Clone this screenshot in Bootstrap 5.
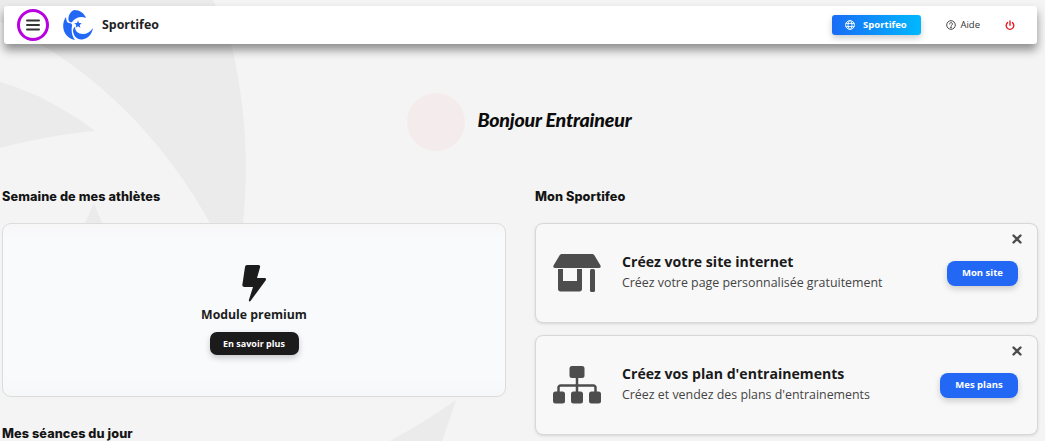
<!DOCTYPE html>
<html lang="fr">
<head>
<meta charset="utf-8">
<title>Sportifeo</title>
<link href="https://cdn.jsdelivr.net/npm/bootstrap@5.3.0/dist/css/bootstrap.min.css" rel="stylesheet">
<style>
html,body{height:441px;overflow:hidden}
body{background:#f4f4f4;font-family:"Open Sans","Liberation Sans",sans-serif;color:#111;position:relative}
.wm{position:absolute;left:0;top:0;width:1045px;height:441px;z-index:0}
.shell{position:relative;z-index:1;padding:6px 8px 0 4px}
.topbar{height:38px;background:#fff;border-radius:3px;box-shadow:0 6px 10px rgba(0,0,0,.42);padding:0 22px 0 13px}
.burger{width:32px;height:32px;border:3px solid #b800e0;border-radius:50%;background:transparent;padding:0}
.brand-name{font-size:12.4px;font-weight:700;color:#222;margin-left:9px}
.logo{margin-left:14px}
.btn-site{width:89px;height:20px;font-size:9.5px;font-weight:700;color:#fff;background:linear-gradient(90deg,#1a6cf5,#00b8ff);border:0;border-radius:3px;box-shadow:0 3px 6px rgba(0,0,0,.2);padding:0 2px 0 0;margin-right:25px}
.help{font-size:9.5px;color:#333;margin-right:25px;gap:4px}
.hello{height:58px;margin-top:49px;gap:12px;padding-right:2px}
.avatar{width:58px;height:58px;background:#f4ecec;border-radius:50%}
.hello-t{font-family:Lato,"Liberation Sans",sans-serif;font-style:italic;font-weight:900;font-size:19.6px;color:#0c0c0c;letter-spacing:-.2px;margin:0;padding-bottom:5px}
.cols{margin-top:36px;margin-left:-2px;gap:29px}
.colL{width:504px;flex:none}
.colR{width:503px;flex:none}
.sec{font-family:Inter,"Liberation Sans",sans-serif;font-weight:800;font-size:12.7px;letter-spacing:.08px;line-height:18px;color:#141414;padding-top:1px;margin:0 0 18px}
.sec-t{margin-bottom:17px}
.prem{height:174px;background:linear-gradient(#f6f6f7,#f9fafc 8%,#f9fafc 90%,#f6f7f8);border:1px solid #dcdcdc;border-radius:9px;padding-top:40px}
.prem-t{font-size:12.3px;font-weight:700;color:#1c1c1c;margin:4px 0 8px;line-height:18px}
.btn-more{height:23px;width:89px;background:#1b1b1b;color:#fff;font-size:9px;font-weight:700;border:0;border-radius:7px;padding:0;box-shadow:0 3px 6px rgba(0,0,0,.2)}
.sec2{margin-top:27px}
.promo{position:relative;height:100px;background:#f8f8f8;border:1px solid #d8d8d8;border-radius:8px;box-shadow:0 1px 3px rgba(0,0,0,.12);padding:0 19px 0 17px;margin-bottom:12px}
.promo-i{width:48px;flex:none;margin-right:21px}
.promo-txt{padding-bottom:2px}
.promo-h{font-size:14.1px;font-weight:700;line-height:19px;color:#1a1a1a;margin:0 0 2px}
.promo-p{font-size:12.4px;line-height:19px;color:#444;margin:0}
.btn-blue{height:25px;background:#2368f5;color:#fff;font-size:9.5px;font-weight:700;border:0;border-radius:8px;padding:0;box-shadow:0 3px 6px rgba(0,0,0,.18)}
.x{position:absolute;right:15px;top:10px;line-height:0}
</style>
</head>
<body>
<svg class="wm" viewBox="0 0 1045 441" aria-hidden="true">
<path d="M0 0H213C222 20 228 35 231 44C244 95 250 160 243 223H210C170 150 110 85 40 44C28 36 14 28 0 22Z" fill="#ebebeb"/>
<path d="M0 82C35 92 68 110 95 131C62 134 30 140 0 148Z" fill="#ebebeb"/>
<path d="M94 203L102 223H85Z" fill="#ebebeb"/>
<path d="M456 400C430 418 410 430 390 441H442C448 425 452 412 456 400Z" fill="#ebebeb"/>
</svg>
<div class="shell">
<nav class="topbar d-flex align-items-center">
<button class="burger d-flex align-items-center justify-content-center" aria-label="menu">
<svg width="14" height="12" viewBox="0 0 14 12"><path d="M1 1.500H13M1 6H13M1 10.500H13" stroke="#333" stroke-width="2" stroke-linecap="round"/></svg>
</button>
<svg class="logo" width="30" height="30" viewBox="0 0 30 30" fill="#2368f5">
<path d="M11 0C17 0 21 3 23 8C18 6 13 7 9 12C8 13 6 12 5.500 10C5 6 7 2 11 0Z"/>
<path d="M3 7C0 11-.5 17 1 21C3 26 7 29 12 30C9 26 8 21 9 16C9.500 14 8 13 6 13C4 13 3.200 10 3 7Z"/>
<path d="M12 17C12 21 15 24 20 24C24 24 27 22 30 18C29 24 25 29 19 29.500C14 30 10.500 26 10 21C10 19 11 17 12 17Z"/>
<path d="M15 10.500l1 2.600 2.800.2-2.100 1.800.7 2.700-2.400-1.500-2.400 1.500.7-2.700-2.100-1.800 2.800-.2Z"/>
</svg>
<span class="brand-name">Sportifeo</span>
<div class="ms-auto d-flex align-items-center">
<button class="btn-site d-flex align-items-center justify-content-center gap-2">
<svg width="10" height="10" viewBox="0 0 10 10" fill="none" stroke="#fff" stroke-width=".9"><circle cx="5" cy="5" r="4.400"/><ellipse cx="5" cy="5" rx="2" ry="4.400"/><path d="M.6 3.400H9.400M.6 6.600H9.400"/></svg>
Sportifeo</button>
<span class="help d-flex align-items-center">
<svg width="10" height="10" viewBox="0 0 10 10" fill="none" stroke="#333" stroke-width=".9"><circle cx="5" cy="5" r="4.300"/><path d="M3.600 4a1.400 1.400 0 1 1 2.200 1.100C5.200 5.500 5 5.700 5 6.300" stroke-linecap="round"/><circle cx="5" cy="7.600" r=".4" fill="#333"/></svg>
Aide</span>
<svg width="10" height="11" viewBox="0 0 10 11" fill="none" stroke="#ec1c24" stroke-width="1.400" stroke-linecap="round"><path d="M5 1V5.200"/><path d="M2.600 2.600a3.800 3.800 0 1 0 4.800 0"/></svg>
</div>
</nav>
<div class="hello d-flex align-items-center justify-content-center">
<div class="avatar"></div>
<h1 class="hello-t">Bonjour Entraineur</h1>
</div>
<div class="cols d-flex">
<div class="colL">
<h2 class="sec sec-t">Semaine de mes athlètes</h2>
<div class="prem d-flex flex-column align-items-center">
<svg width="24" height="38" viewBox="0 0 24 38"><path d="M5 1H16.500C17.800 1 18.500 2.200 18 3.400L15 14H22.500C24 14 24.400 15.400 23.600 16.600L8.500 37C7.600 38 6.600 37.200 6.900 36L11 23H2.500C1 23 0 22 .4 20.400L3 3C3.200 1.800 4 1 5 1Z" fill="#1c1c1c"/></svg>
<p class="prem-t">Module premium</p>
<button class="btn-more">En savoir plus</button>
</div>
<h2 class="sec sec2">Mes séances du jour</h2>
</div>
<div class="colR">
<h2 class="sec sec-t">Mon Sportifeo</h2>
<div class="promo d-flex align-items-center">
<svg class="promo-i" height="38" viewBox="0 0 48 38"><path d="M9 0H39C40 0 41 .5 41.500 1.500L47.500 11.500C48 13 47.500 14 46 14H2C.5 14 0 13 .5 11.500L6.500 1.500C7 .5 8 0 9 0Z" fill="#4d4d4d"/><path d="M5 15H10V27H24V15H29V35C29 36.500 28 37.500 26.500 37.500H7.500C6 37.500 5 36.500 5 35Z" fill="#4d4d4d"/><rect x="37" y="15" width="5" height="23" rx="1.500" fill="#4d4d4d"/></svg>
<div class="promo-txt">
<p class="promo-h">Créez votre site internet</p>
<p class="promo-p">Créez votre page personnalisée gratuitement</p>
</div>
<button class="btn-blue ms-auto" style="width:71px">Mon site</button>
<svg class="x" width="10" height="10" viewBox="0 0 10 10"><path d="M1.500 1.500L8.500 8.500M8.500 1.500L1.500 8.500" stroke="#4d4d4d" stroke-width="2.400" stroke-linecap="round"/></svg>
</div>
<div class="promo d-flex align-items-center">
<svg class="promo-i" height="38" viewBox="0 0 48 38"><rect x="16.500" y="0" width="15" height="12" rx="2.500" fill="#4d4d4d"/><path d="M24 12V26M5.500 26V21.500C5.500 20.500 6.500 19.500 7.500 19.500H40.500C41.500 19.500 42.500 20.500 42.500 21.500V26" fill="none" stroke="#4d4d4d" stroke-width="2.500"/><rect x="0" y="25.500" width="12" height="12" rx="2.500" fill="#4d4d4d"/><rect x="18" y="25.500" width="12" height="12" rx="2.500" fill="#4d4d4d"/><rect x="36" y="25.500" width="12" height="12" rx="2.500" fill="#4d4d4d"/></svg>
<div class="promo-txt">
<p class="promo-h">Créez vos plan d'entrainements</p>
<p class="promo-p">Créez et vendez des plans d'entrainements</p>
</div>
<button class="btn-blue ms-auto" style="width:78px">Mes plans</button>
<svg class="x" width="10" height="10" viewBox="0 0 10 10"><path d="M1.500 1.500L8.500 8.500M8.500 1.500L1.500 8.500" stroke="#4d4d4d" stroke-width="2.400" stroke-linecap="round"/></svg>
</div>
</div>
</div>
</div>
<script src="https://cdn.jsdelivr.net/npm/bootstrap@5.3.0/dist/js/bootstrap.bundle.min.js"></script>
</body>
</html>
